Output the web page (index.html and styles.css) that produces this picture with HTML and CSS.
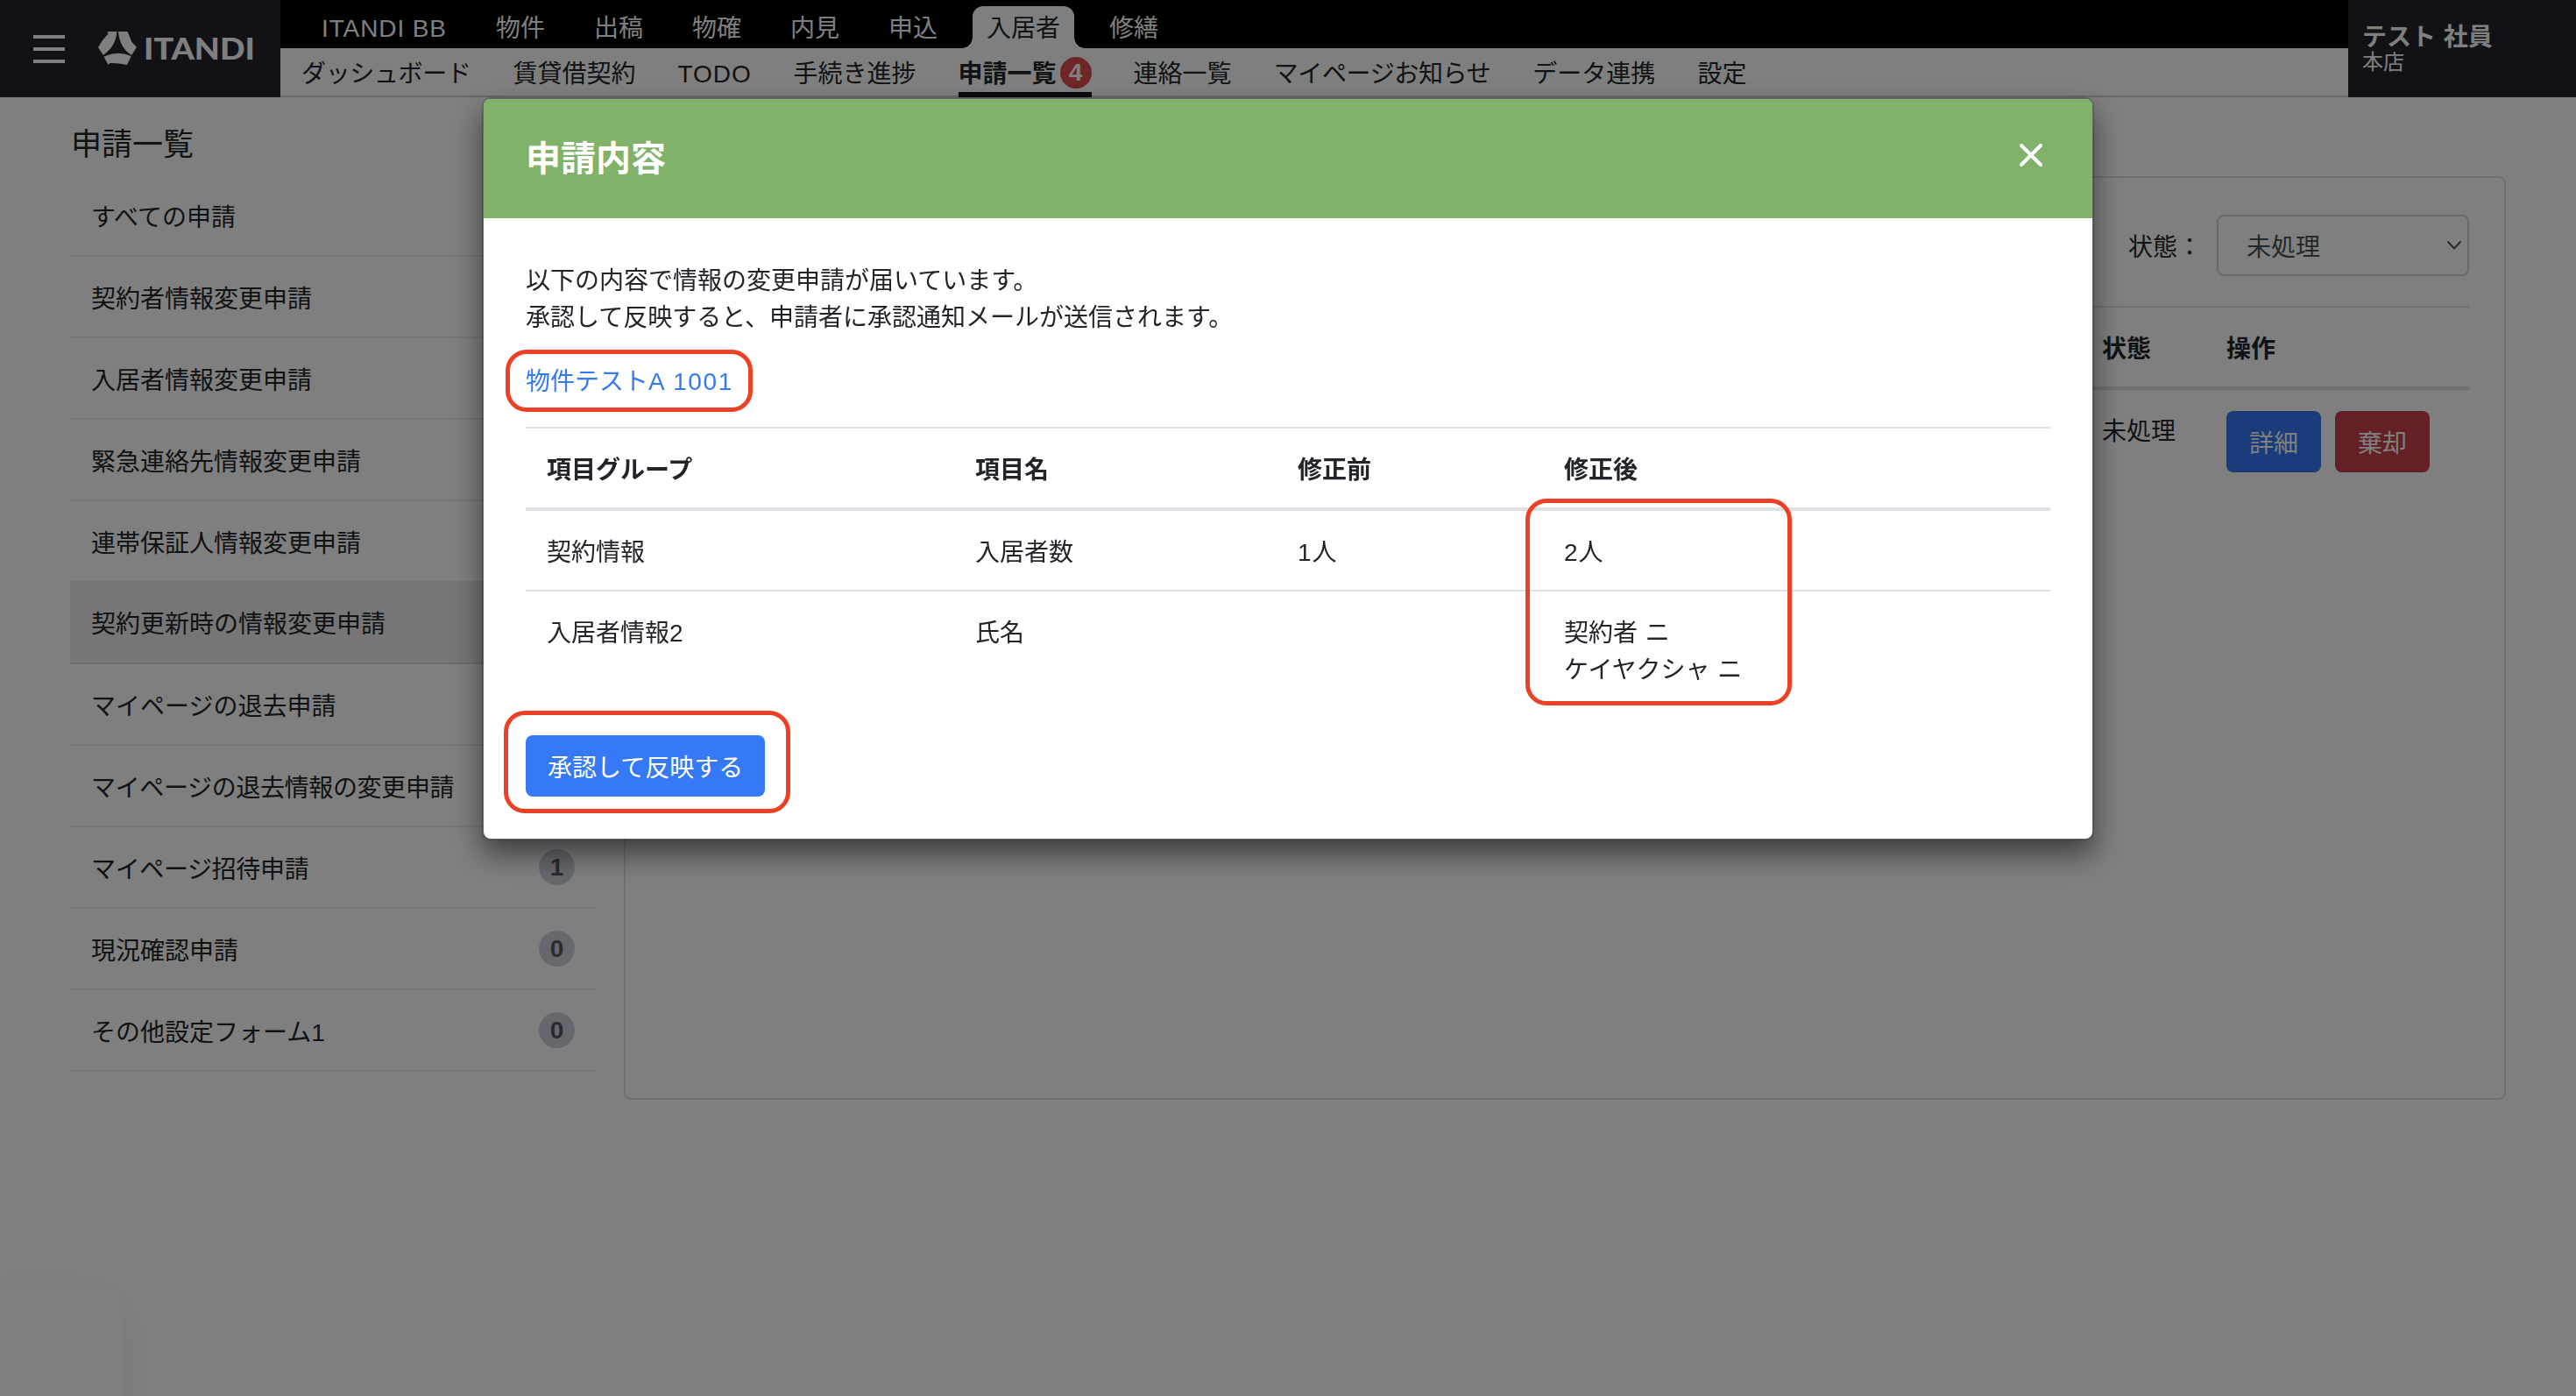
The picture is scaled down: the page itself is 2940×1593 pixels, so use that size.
FILE: index.html
```html
<!DOCTYPE html>
<html lang="ja">
<head>
<meta charset="utf-8" />
<title>申請一覧</title>
<link rel="stylesheet" href="styles.css">
</head>

<body>

<header class="header">
  <div class="brand">
    <div class="menu"><span></span><span></span><span></span></div>
    <svg class="logo" width="180" height="45" viewBox="0 0 180 45">
      <path d="M10.5 3 L21.5 3 C20.5 14 15.5 23.5 5.7 29.7 L0 21 L5 13 L11.5 5.5 Z" fill="#fff"/>
      <path d="M23 3 L33.5 3 L38.5 15 L44 21 L38.3 29.7 C29 25 24 15 23 3 Z" fill="#fff"/>
      <path d="M6.5 31.5 Q22 24.5 37.8 31 L33 41 Q22 38.5 13.5 39 L11.5 41 Z" fill="#fff"/>
      <text class="logo-text" x="52" y="35" textLength="127" lengthAdjust="spacingAndGlyphs">ITANDI</text>
    </svg>
  </div>
  <div class="navs">
    <nav class="nav-top">
      <a class="bb"><span class="latin">ITANDI BB</span></a>
      <a>物件</a>
      <a>出稿</a>
      <a>物確</a>
      <a>内見</a>
      <a>申込</a>
      <a class="on">入居者</a>
      <a>修繕</a>
    </nav>
    <nav class="nav-sub">
      <a class="kana">ダッシュボード</a>
      <a>賃貸借契約</a>
      <a class="todo"><span class="latin">TODO</span></a>
      <a>手続き進捗</a>
      <a class="on">申請一覧<span class="count">4</span></a>
      <a>連絡一覧</a>
      <a class="kana">マイページお知らせ</a>
      <a>データ連携</a>
      <a>設定</a>
    </nav>
  </div>
  <div class="user">
    <b>テスト<span class="latin"> </span>社員</b>
    <span class="branch">本店</span>
  </div>
</header>

<div id="main">
  <aside class="side">
    <h1>申請一覧</h1>
    <ul>
      <li><span>すべての申請</span></li>
      <li><span>契約者情報変更申請</span></li>
      <li><span>入居者情報変更申請</span></li>
      <li><span>緊急連絡先情報変更申請</span></li>
      <li><span>連帯保証人情報変更申請</span></li>
      <li class="on"><span>契約更新時の情報変更申請</span></li>
      <li><span>マイページの退去申請</span></li>
      <li><span class="kana">マイページの退去情報の変更申請</span></li>
      <li><span class="kana">マイページ招待申請</span><em>1</em></li>
      <li><span>現況確認申請</span><em>0</em></li>
      <li><span>その他設定フォーム<span class="latin">1</span></span><em>0</em></li>
    </ul>
  </aside>

  <section class="panel">
    <div class="filter">
      <label>状態：</label>
      <div class="select">未処理
        <svg width="18" height="12" viewBox="0 0 18 12"><path d="M1.5 1.5 L9 9.5 L16.5 1.5" fill="none" stroke="#495057" stroke-width="2"/></svg>
      </div>
    </div>
    <div class="list-row head"><div>状態</div><div>操作</div></div>
    <div class="list-row">
      <div>未処理</div>
      <div class="btns"><a class="btn blue">詳細</a><a class="btn red">棄却</a></div>
    </div>
  </section>
</div>

<div class="chat"></div>
<div class="overlay"></div>

<div class="modal">
  <div class="modal-head">
    <h2>申請内容</h2>
    <svg width="26" height="26" viewBox="0 0 26 26"><path d="M2 2 L24 24 M24 2 L2 24" stroke="#fff" stroke-width="4" stroke-linecap="round"/></svg>
  </div>
  <div class="modal-body">
    <p>以下の内容で情報の変更申請が届いています。<br>承認して反映すると、申請者に承認通知メールが送信されます。</p>
    <div class="link"><a class="mark">物件テスト<span class="latin">A 1001</span></a></div>
    <div class="table">
      <div class="tr th"><div>項目グループ</div><div>項目名</div><div>修正前</div><div>修正後</div></div>
      <div class="tr"><div>契約情報</div><div>入居者数</div><div><span class="latin">1</span>人</div><div><span class="latin">2</span>人</div></div>
      <div class="tr"><div>入居者情報<span class="latin">2</span></div><div>氏名</div><div></div><div>契約者<span class="latin"> </span>ニ<br>ケイヤクシャ<span class="latin"> </span>ニ</div></div>
      <i class="mark-after"></i>
    </div>
    <div class="submit"><a class="btn blue mark">承認して反映する</a></div>
  </div>
</div>

</body>
</html>
```

FILE: styles.css
```css
*, *:before, *:after{
box-sizing:border-box;
}
body , html{
margin:0px;
padding:0px;
height:100%;
overflow:hidden;
background:#fff;
color:#212529;
font-family:"Noto Sans CJK JP", sans-serif;
font-size:28px;
line-height:42px;
}
h1, h2, p, ul{
margin:0;
padding:0;
font-weight:normal;
}
h1, h2, .branch, .latin, .count, .side em{
font-family:"Liberation Sans", "Noto Sans CJK JP", sans-serif;
}
.latin{
line-height:1;
letter-spacing:.9px;
}
a, label, li span{
white-space:nowrap;
}
.kana{
letter-spacing:-0.35px;
}

/* header */
.header{
display:flex;
height:111px;
}
.brand{
width:320px;
background:#24232c;
display:flex;
align-items:center;
padding-left:38px;
}
.menu{
width:36px;
display:flex;
flex-direction:column;
gap:10px;
margin-right:38px;
}
.menu span{
height:4px;
background:#fff;
}
.logo-text{
font-family:Lato, sans-serif;
font-weight:900;
font-size:35px;
fill:#fff;
}
.navs{
flex:1;
border-bottom:2px solid #d0d0d4;
}
.nav-top{
height:55px;
background:#000;
display:flex;
gap:24px;
padding:7px 0 0 31px;
}
.nav-top a{
height:48px;
line-height:46px;
padding:0 16px;
color:#fff;
}
.nav-top .bb{
width:175px;
}
.nav-top .on{
position:relative;
background:#fff;
color:#212529;
border-radius:12px 12px 0 0;
}
/* flared feet of the open tab */
.nav-top .on:before, .nav-top .on:after{
content:"";
position:absolute;
bottom:0;
width:12px;
height:12px;
}
.nav-top .on:before{
left:-12px;
background:radial-gradient(circle at 0 0, transparent 11.5px, #fff 12px);
}
.nav-top .on:after{
right:-12px;
background:radial-gradient(circle at 100% 0, transparent 11.5px, #fff 12px);
}
.nav-sub{
height:56px;
display:flex;
gap:48px;
padding-left:24px;
}
.nav-sub a{
height:56px;
line-height:55px;
}
.nav-sub .todo{
width:84px;
}
.nav-sub .on{
display:flex;
font-weight:bold;
border-bottom:6px solid #14131f;
}
.count{
width:36px;
height:36px;
line-height:36px;
margin:10px 0 0 4px;
border-radius:50%;
background:#dc4c50;
color:#fff;
text-align:center;
}
.user{
width:260px;
background:#24232c;
color:#fff;
padding:19px 0 0 16px;
display:flex;
flex-direction:column;
}
.branch{
font-size:24px;
line-height:19px;
}

/* page */
#main{
display:flex;
padding-left:80px;
}
.side{
width:600px;
}
.side h1{
font-size:35px;
line-height:42px;
padding:33px 0 14px 1px;
}
.side ul{
list-style:none;
}
.side li{
height:93px;
padding:0 24px;
border-bottom:2px solid #ededed;
display:flex;
align-items:center;
justify-content:space-between;
}
.side li.on{
height:95px;
margin-top:-2px;
background:#ececec;
border-color:#dcdcdc;
}
.side em{
width:41px;
height:41px;
border-radius:50%;
background:#ced0da;
color:#55565c;
font-style:normal;
font-weight:bold;
text-align:center;
line-height:42px;
}
.panel{
width:2148px;
height:1054px;
margin:90px 0 0 32px;
border:2px solid #dfdfdf;
border-radius:8px;
padding:42px 40px;
}
.filter{
display:flex;
justify-content:flex-end;
align-items:center;
gap:17px;
padding-bottom:34px;
border-bottom:2px solid #dee2e6;
}
.select{
width:288px;
height:70px;
border:2px solid #ced4da;
border-radius:8px;
padding:0 6px 0 32px;
display:flex;
align-items:center;
justify-content:space-between;
color:#495057;
}
.list-row{
display:grid;
grid-template-columns:142px 277px;
justify-content:end;
padding:24px 0;
}
.list-row.head{
font-weight:bold;
border-bottom:4px solid #dee2e6;
}
.btns{
display:flex;
gap:16px;
}
.btn{
display:inline-block;
height:70px;
line-height:70px;
padding:0 26px;
border-radius:8px;
color:#fff;
}
.blue{
background:#3579f6;
}
.red{
background:#c84048;
}
.chat{
position:fixed;
left:0;
bottom:0;
width:141px;
height:123px;
border-radius:0 20px 0 0;
background:#fff;
box-shadow:-20px 30px 60px rgba(0,0,0,.15);
}
.overlay{
position:fixed;
inset:0;
background:rgba(0,0,0,.5);
}

/* dialog */
.modal{
position:fixed;
left:550px;
top:111px;
width:1840px;
border:2px solid rgba(0,0,0,.2);
border-radius:10px;
background:#fff;
background-clip:padding-box;
box-shadow:0 16px 32px rgba(0,0,0,.5);
}
.modal-head{
height:136px;
padding:0 57px 0 48px;
background:#80b269;
border-radius:7px 7px 0 0;
display:flex;
align-items:center;
justify-content:space-between;
}
.modal-head h2{
font-size:40px;
font-weight:bold;
color:#fff;
}
.modal-head svg{
margin-bottom:8px;
}
.modal-body{
padding:48px;
}
.link{
padding:31px 0 33px;
}
.link a{
color:#3579f6;
}
.link .latin{
letter-spacing:1.6px;
}
.table{
position:relative;
}
.tr{
display:grid;
grid-template-columns:489px 368px 304px 579px;
border-top:2px solid #dee2e6;
}
.tr div{
padding:24px;
}
.th{
font-weight:bold;
border-bottom:4px solid #dee2e6;
}
.th + .tr{
border-top:0;
}
.submit{
padding-top:32px;
display:flex;
}
.submit .btn{
padding:0 25px;
}

/* red frames round the points to check */
.mark{
position:relative;
}
.mark:after, .mark-after{
content:"";
position:absolute;
border:5px solid #ec4126;
border-radius:24px;
}
.link .mark:after{
left:-23px;
top:-14px;
width:282px;
height:71px;
}
.submit .mark:after{
left:-25px;
top:-28px;
width:327px;
height:117px;
}
.mark-after{
left:1141px;
top:82px;
width:304px;
height:236px;
}
```
